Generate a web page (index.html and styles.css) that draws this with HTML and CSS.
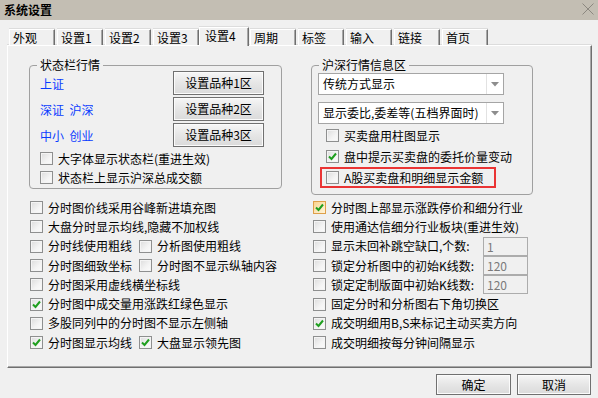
FILE: index.html
```html
<!DOCTYPE html>
<html lang="zh-CN">
<head>
<meta charset="utf-8">
<title>系统设置</title>
<link rel="stylesheet" href="styles.css">
</head>
<body>
<div class="titlebar">
  <span class="title">系统设置</span>
  <svg class="close" width="12" height="12" viewBox="0 0 12 12"><path d="M0.5 0.5 L11.5 11.5 M11.5 0.5 L0.5 11.5" stroke="#8c8880" stroke-width="1" fill="none"/></svg>
</div>
<div class="tabs">
  <div class="tab">外观</div>
  <div class="tab">设置1</div>
  <div class="tab">设置2</div>
  <div class="tab">设置3</div>
  <div class="tab active">设置4</div>
  <div class="tab">周期</div>
  <div class="tab">标签</div>
  <div class="tab">输入</div>
  <div class="tab">链接</div>
  <div class="tab">首页</div>
</div>
<div class="panel">
  <div class="group group-left">
    <div class="legend">状态栏行情</div>
    <div class="btnrow"><span class="mkt">上证</span><button class="btn btn-kind">设置品种1区</button></div>
    <div class="btnrow"><span class="mkt">深证&nbsp; 沪深</span><button class="btn btn-kind">设置品种2区</button></div>
    <div class="btnrow"><span class="mkt">中小&nbsp; 创业</span><button class="btn btn-kind">设置品种3区</button></div>
    <div class="grow first"><span class="cb"><span class="box"></span>大字体显示状态栏(重进生效)</span></div>
    <div class="grow"><span class="cb"><span class="box"></span>状态栏上显示沪深总成交额</span></div>
  </div>
  <div class="group group-right">
    <div class="legend">沪深行情信息区</div>
    <div class="combo"><span class="combo-text">传统方式显示</span><span class="combo-btn"><svg width="8" height="5" viewBox="0 0 8 5"><path d="M0 0 H8 L4 4.5 Z" fill="#8d8d8d"/></svg></span></div>
    <div class="combo"><span class="combo-text">显示委比,委差等(五档界面时)</span><span class="combo-btn"><svg width="8" height="5" viewBox="0 0 8 5"><path d="M0 0 H8 L4 4.5 Z" fill="#8d8d8d"/></svg></span></div>
    <div class="rrow first"><span class="cb"><span class="box"></span>买卖盘用柱图显示</span></div>
    <div class="rrow"><span class="cb"><span class="box checked"><svg viewBox="0 0 11 11"><path d="M2 5.5 L4.5 8 L9 2.5" stroke="#1f9f1f" stroke-width="2" fill="none"/></svg></span>盘中提示买卖盘的委托价量变动</span></div>
    <div class="rrow marked"><span class="cb"><span class="box"></span>A股买卖盘和明细显示金额</span></div>
  </div>
  <div class="list list-left">
    <div class="lrow"><span class="cb"><span class="box"></span>分时图价线采用谷峰新进填充图</span></div>
    <div class="lrow"><span class="cb"><span class="box"></span>大盘分时显示均线,隐藏不加权线</span></div>
    <div class="lrow"><span class="cb"><span class="box"></span>分时线使用粗线</span><span class="cb second"><span class="box"></span>分析图使用粗线</span></div>
    <div class="lrow"><span class="cb"><span class="box"></span>分时图细致坐标</span><span class="cb second"><span class="box"></span>分时图不显示纵轴内容</span></div>
    <div class="lrow"><span class="cb"><span class="box"></span>分时图采用虚线横坐标线</span></div>
    <div class="lrow"><span class="cb"><span class="box checked"><svg viewBox="0 0 11 11"><path d="M2 5.5 L4.5 8 L9 2.5" stroke="#1f9f1f" stroke-width="2" fill="none"/></svg></span>分时图中成交量用涨跌红绿色显示</span></div>
    <div class="lrow"><span class="cb"><span class="box"></span>多股同列中的分时图不显示左侧轴</span></div>
    <div class="lrow"><span class="cb"><span class="box checked"><svg viewBox="0 0 11 11"><path d="M2 5.5 L4.5 8 L9 2.5" stroke="#1f9f1f" stroke-width="2" fill="none"/></svg></span>分时图显示均线</span><span class="cb second"><span class="box checked"><svg viewBox="0 0 11 11"><path d="M2 5.5 L4.5 8 L9 2.5" stroke="#1f9f1f" stroke-width="2" fill="none"/></svg></span>大盘显示领先图</span></div>
  </div>
  <div class="list list-right">
    <div class="lrow"><span class="cb"><span class="box checked hot"><svg viewBox="0 0 11 11"><path d="M2 5.5 L4.5 8 L9 2.5" stroke="#1f9f1f" stroke-width="2" fill="none"/></svg></span>分时图上部显示涨跌停价和细分行业</span></div>
    <div class="lrow"><span class="cb"><span class="box"></span>使用通达信细分行业板块(重进生效)</span></div>
    <div class="lrow"><span class="cb"><span class="box"></span>显示未回补跳空缺口,个数:</span><span class="field">1</span></div>
    <div class="lrow"><span class="cb"><span class="box"></span>锁定分析图中的初始K线数:</span><span class="field">120</span></div>
    <div class="lrow"><span class="cb"><span class="box"></span>锁定定制版面中初始K线数:</span><span class="field">120</span></div>
    <div class="lrow"><span class="cb"><span class="box"></span>固定分时和分析图右下角切换区</span></div>
    <div class="lrow"><span class="cb"><span class="box checked"><svg viewBox="0 0 11 11"><path d="M2 5.5 L4.5 8 L9 2.5" stroke="#1f9f1f" stroke-width="2" fill="none"/></svg></span>成交明细用B,S来标记主动买卖方向</span></div>
    <div class="lrow"><span class="cb"><span class="box"></span>成交明细按每分钟间隔显示</span></div>
  </div>
</div>
<div class="footer">
  <button class="btn btn-ok">确定</button>
  <button class="btn btn-cancel">取消</button>
</div>
</body>
</html>
```

FILE: styles.css
```css
* { box-sizing: border-box; }
html, body { margin: 0; padding: 0; }
body {
  width: 598px;
  height: 398px;
  overflow: hidden;
  background: #f0f0f0;
  font-family: "Noto Sans CJK SC", "Noto Sans", sans-serif;
  font-size: 12px;
  color: #000;
  line-height: 14px;
}

.titlebar {
  height: 20px;
  background: #c3beb3;
  display: flex;
  align-items: center;
  justify-content: space-between;
  padding: 0 4px 0 4px;
}
.title { font-weight: bold; font-size: 12px; line-height: 16px; }
.close { display: block; margin-top: -2px; }

.tabs {
  height: 25px;
  display: flex;
  align-items: flex-end;
  padding-left: 9px;
}
.tab {
  width: 46px;
  height: 16px;
  margin-right: 2px;
  padding-left: 3px;
  border-top: 1px solid #fff;
  border-left: 1px solid #fff;
  border-right: 1px solid #6f6f6f;
  box-shadow: inset -1px 0 0 #a8a8a8, 0 -1px 0 #dcdcdc;
  background: #f0f0f0;
  line-height: 15px;
  white-space: nowrap;
}
.tab.active {
  position: relative;
  z-index: 1;
  width: 50px;
  height: 19px;
  margin: 0 1px -1px -2px;
  padding-left: 5px;
  line-height: 15px;
}

.panel {
  width: 585px;
  height: 323px;
  margin-left: 7px;
  border-top: 1px solid #fff;
  border-left: 1px solid #fff;
  border-right: 1px solid #6f6f6f;
  border-bottom: 1px solid #6f6f6f;
  box-shadow: inset -1px -1px 0 #a8a8a8, 0 -1px 0 #dcdcdc;
  padding: 19px 0 0 21px;
  display: grid;
  grid-template-columns: 253px 222px;
  grid-template-rows: 130px auto;
  column-gap: 29px;
  align-items: start;
}

.group {
  position: relative;
  border: 1px solid #a0a0a0;
  border-radius: 4px;
}
.group-left { height: 124px; padding: 5px 17px 0 10px; }
.group-right { height: 130px; padding: 7px 0 0 6px; }
.legend {
  position: absolute;
  top: -9px;
  left: 7px;
  padding: 0 3px;
  background: #f0f0f0;
  line-height: 16px;
}

.btnrow {
  height: 24px;
  margin-bottom: 2px;
  display: flex;
  align-items: center;
  justify-content: space-between;
}
.mkt { color: #0a3cff; margin-top: 1px; line-height: 16px; }

.btn {
  font-family: inherit;
  font-size: 12px;
  color: #000;
  padding: 0;
  border: 1px solid #707070;
  border-radius: 0;
  background: linear-gradient(#f6f6f6, #e6e6e6 50%, #dadada);
  box-shadow: inset 0 0 0 1px #fbfbfb;
  line-height: 16px;
}
.btn-kind { width: 91px; height: 24px; }

.grow { height: 19px; display: flex; align-items: center; }
.grow.first { margin-top: 2px; }

.cb { display: inline-flex; align-items: center; white-space: nowrap; line-height: 16px; }
.box {
  width: 13px;
  height: 13px;
  margin-right: 5px;
  border: 1px solid #8e8f8f;
  background: linear-gradient(135deg, #dcdcdc, #f4f4f4 60%, #fbfbfb);
  box-shadow: inset 0 0 0 1px #f4f4f4;
  flex: none;
  display: flex;
}
.box svg { width: 11px; height: 11px; display: block; }
.box.hot {
  border-color: #dea04a;
  background: linear-gradient(135deg, #f9d38d, #fde9bf 60%, #fff3d8);
  box-shadow: none;
}

.combo {
  width: 186px;
  height: 22px;
  margin-bottom: 7px;
  border: 1px solid #a5a5a5;
  background: #fff;
  display: flex;
  align-items: center;
}
.combo-text { flex: 1; padding-left: 4px; white-space: nowrap; line-height: 16px; }
.combo-btn {
  width: 17px;
  height: 20px;
  border-left: 1px solid #e2e2e2;
  display: flex;
  align-items: center;
  justify-content: center;
  flex: none;
}

.rrow { height: 21px; display: flex; align-items: center; padding-left: 8px; }
.rrow.first { margin-top: -6px; }
.rrow.marked {
  width: 176px;
  margin-left: 2px;
  padding-left: 4px;
  border: 2px solid #ea3434;
}

.list { margin-top: 3px; }
.list-left { margin-left: 1px; }
.list-right { margin-left: 2px; width: 215px; }
.lrow { height: 19.3px; display: flex; align-items: center; }
.second { margin-left: 7px; }

.field {
  margin-left: auto;
  width: 45px;
  height: 19px;
  border: 1px solid #acacac;
  background: #f0f0f0;
  color: #7a7a7a;
  padding-left: 3px;
  line-height: 17px;
}

.footer {
  display: flex;
  justify-content: flex-end;
  gap: 6px;
  padding-right: 7px;
  margin-top: 6px;
}
.btn-ok { width: 75px; height: 21px; }
.btn-cancel { width: 74px; height: 21px; }
```
